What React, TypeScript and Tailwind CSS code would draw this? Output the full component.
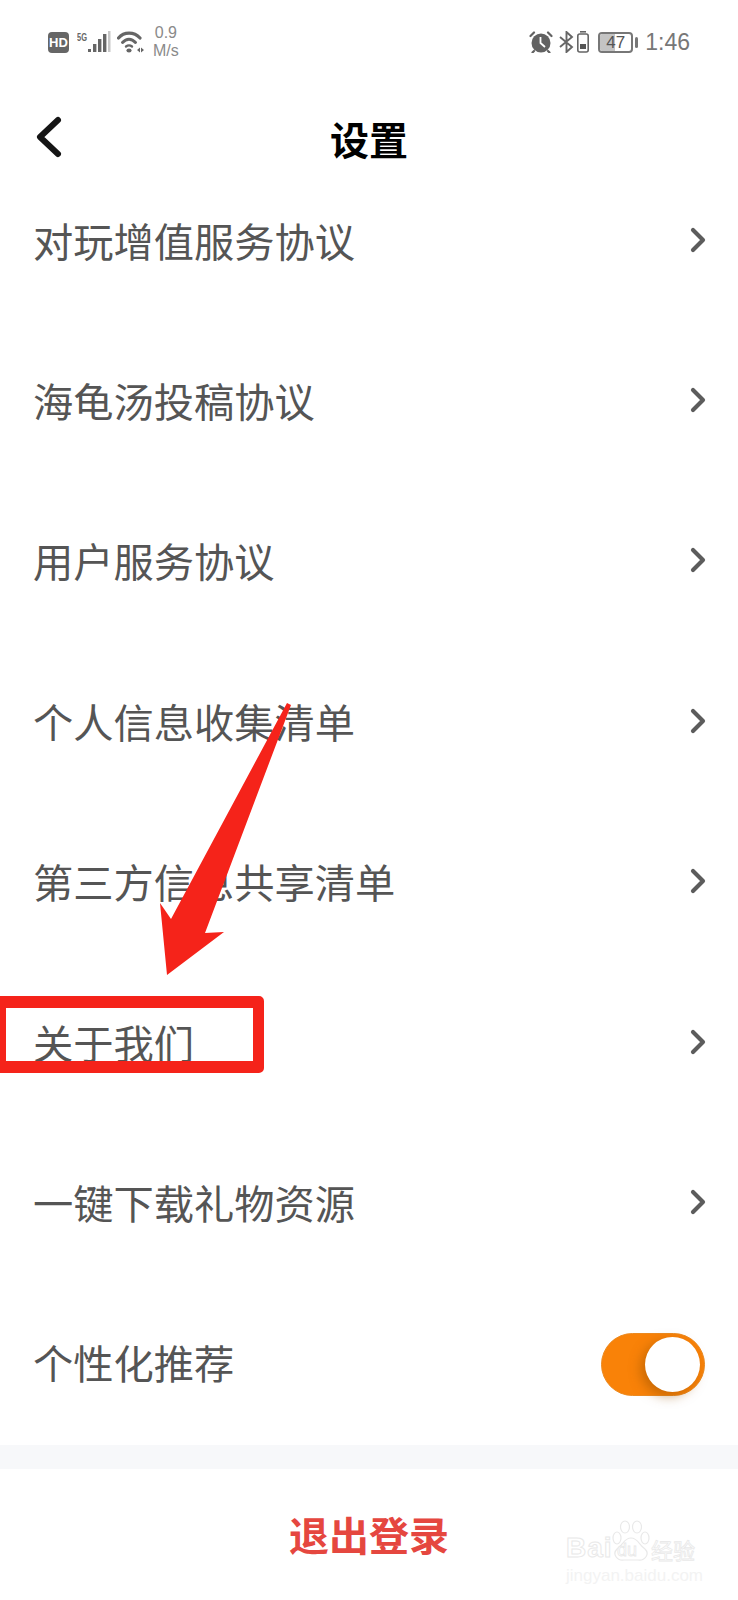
const rows = [
  "对玩增值服务协议",
  "海龟汤投稿协议",
  "用户服务协议",
  "个人信息收集清单",
  "第三方信息共享清单",
  "关于我们",
  "一键下载礼物资源",
]

function Chevron() {
  return (
    <svg width="16" height="26" viewBox="0 0 16 26" fill="none">
      <path d="M3 3 L13 13 L3 23" stroke="#5c5c5c" strokeWidth="4.2" strokeLinecap="round" strokeLinejoin="round" />
    </svg>
  )
}

function StatusLeft() {
  return (
    <div className="flex items-center">
      {/* HD badge */}
      <div className="ml-[48px] w-[21px] h-[21px] rounded-[4px] bg-[#666] text-white text-[13px] font-bold flex items-center justify-center leading-none font-['Liberation_Sans',sans-serif]">
        HD
      </div>
      {/* 5G + signal */}
      <svg className="ml-[8px]" width="34" height="22" viewBox="0 0 34 22">
        <text x="0" y="10" fontSize="11" fontWeight="700" fill="#666" textLength="10" lengthAdjust="spacingAndGlyphs" fontFamily="Liberation Sans, sans-serif">5G</text>
        <rect x="11" y="18" width="3" height="3" fill="#666" />
        <rect x="16" y="13" width="3.4" height="8" fill="#666" />
        <rect x="21" y="8" width="3.4" height="13" fill="#666" />
        <rect x="26" y="3" width="3.4" height="18" fill="#666" />
        <rect x="31" y="0" width="2.5" height="21" fill="#c8c8c8" />
      </svg>
      {/* wifi */}
      <svg className="ml-[6px]" width="27" height="22" viewBox="0 0 27 22" fill="none">
        <path d="M1.5 7 C7 0.5 17 0.5 23 7" stroke="#666" strokeWidth="3.2" strokeLinecap="round" />
        <path d="M5.5 11.5 C9.5 7 14.5 7 18.5 11.5" stroke="#666" strokeWidth="3" strokeLinecap="round" />
        <path d="M9 15.5 C11 14 13 14 15 15.5" stroke="#666" strokeWidth="2.4" strokeLinecap="round" />
        <ellipse cx="12" cy="19.5" rx="2.6" ry="2" fill="#666" />
        <path d="M20 19 L23 16.5 V21.5 Z M27 19 L24 16.5 V21.5 Z" fill="#666" />
      </svg>
      <div className="ml-[9px] flex flex-col items-center text-[16px] leading-[18px] text-[#8a8a8a] font-['Liberation_Sans',sans-serif]">
        <span>0.9</span>
        <span>M/s</span>
      </div>
    </div>
  )
}

function StatusRight() {
  return (
    <div className="flex items-center mr-[48px]">
      {/* alarm */}
      <svg width="24" height="22" viewBox="0 0 24 22" fill="none">
        <circle cx="12" cy="12" r="9.5" fill="#626262" />
        <path d="M11.5 6 V12 L16 16" stroke="#fff" strokeWidth="1.8" />
        <path d="M1.5 5 L5 1.5 M22.5 5 L19 1.5 M5 20 L3.5 21.5 M19 20 L20.5 21.5" stroke="#626262" strokeWidth="2.2" strokeLinecap="round" />
      </svg>
      {/* bluetooth */}
      <svg className="ml-[6px]" width="15" height="22" viewBox="0 0 15 22" fill="none">
        <path d="M1 6 L13 16 L7.5 21 V1 L13 6 L1 16" stroke="#666" strokeWidth="1.9" />
      </svg>
      {/* phone battery */}
      <svg className="ml-[3px]" width="12" height="22" viewBox="0 0 12 22" fill="none">
        <rect x="3" y="0" width="6" height="1.6" fill="#666" />
        <rect x="0.8" y="3" width="10.4" height="18" rx="2" stroke="#666" strokeWidth="1.6" />
        <rect x="3" y="13" width="6" height="5" fill="#555" />
      </svg>
      {/* battery */}
      <div className="ml-[9px] relative w-[35px] h-[21px] rounded-[4px] border-2 border-[#777] overflow-hidden font-['Liberation_Sans',sans-serif]">
        <div className="absolute left-0 top-0 bottom-0 w-[15px] bg-[#c4c4c4]" />
        <div className="absolute inset-0 flex items-center justify-center text-[17px] leading-none text-[#555]">47</div>
      </div>
      <div className="ml-[2px] w-[3px] h-[11px] rounded-sm bg-[#777]" />
      <span className="ml-[7px] text-[23px] leading-none text-[#777] font-['Liberation_Sans',sans-serif]">1:46</span>
    </div>
  )
}

function Toggle() {
  return (
    <div className="w-[104px] h-[63px] rounded-full bg-[#f98208] flex items-center justify-end pr-[4px] border border-[#ec8a20]">
      <div className="w-[55px] h-[55px] rounded-full bg-white shadow-[-4px_4px_12px_rgba(150,80,0,0.5)]" />
    </div>
  )
}

export default function App() {
  return (
    <div className="relative w-[738px] h-[1600px] overflow-hidden bg-white flex flex-col font-['Noto_Sans_CJK_SC',sans-serif]">
      <div className="h-[84px] flex items-center justify-between shrink-0">
        <StatusLeft />
        <StatusRight />
      </div>

      {/* Title bar */}
      <div className="relative h-[78px] pt-[30px] flex items-center justify-center shrink-0">
        <svg className="absolute left-[35px] top-[31px]" width="28" height="46" viewBox="0 0 28 46" fill="none">
          <path d="M23 5 L5 22 L23 39" stroke="#151515" strokeWidth="6" strokeLinecap="round" strokeLinejoin="round" />
        </svg>
        <h1 className="text-[39px] leading-none font-bold text-black">设置</h1>
      </div>

      {/* Rows */}
      <div className="shrink-0">
        {rows.map((label) => (
          <div key={label} className="h-[160.4px] flex items-center justify-between pl-[33px] pr-[32px]">
            <span className="text-[40.25px] leading-none text-[#555] pb-[5px]">{label}</span>
            <div className="pb-[5px]">
              <Chevron />
            </div>
          </div>
        ))}
        <div className="h-[160.4px] flex items-center justify-between pl-[33px] pr-[33px]">
          <span className="text-[40.25px] leading-none text-[#555] pb-[5px]">个性化推荐</span>
          <Toggle />
        </div>
      </div>

      <div className="h-[24px] bg-[#f7f8fa] shrink-0" />

      {/* Logout */}
      <div className="flex-1 flex items-center justify-center pb-[1px]">
        <span className="text-[40px] leading-none font-bold text-[#e5473f]">退出登录</span>
      </div>

      {/* Annotation: arrow */}
      <svg className="absolute left-0 top-0 pointer-events-none" width="738" height="1600" fill="none">
        <polygon points="287,703 291,705 205,933 224,932 167,975 160,903 171,919" fill="#f5231a" />
      </svg>

      {/* Annotation: red box */}
      <div className="absolute left-0 top-[996px] w-[264px] h-[77px] rounded-r-[5px] border-y-[12px] border-l-[6px] border-r-[11px] border-[#f5231a]" />

      {/* Watermark */}
      <div className="absolute left-[566px] top-[1518px] w-[134px] pointer-events-none text-white [-webkit-text-stroke:1px_#e9e9e9]">
        <div className="flex items-end h-[44px]">
          <span className="text-[28px] leading-[28px] font-bold font-['Liberation_Sans',sans-serif] w-[45px] tracking-[1px]">Bai</span>
          <div className="relative w-[40px] h-[42px]">
            <svg className="absolute inset-0" width="40" height="42" viewBox="0 0 40 42" fill="none" stroke="#e9e9e9" strokeWidth="1.2">
              <ellipse cx="6" cy="18" rx="4" ry="6" />
              <ellipse cx="14" cy="7" rx="4.5" ry="6" />
              <ellipse cx="26" cy="7" rx="4.5" ry="6" />
              <ellipse cx="34" cy="18" rx="4" ry="6" />
              <path d="M20 18 C13 18 12 25 6 29 C1 34 6 41 13 40 H27 C34 41 39 34 34 29 C28 25 27 18 20 18 Z" />
            </svg>
            <span className="absolute left-[6px] bottom-[3px] text-[18px] leading-none font-['Liberation_Sans',sans-serif] [-webkit-text-stroke:0.8px_#e9e9e9]">du</span>
          </div>
          <span className="text-[22px] leading-[26px] [-webkit-text-stroke:0.8px_#e9e9e9] whitespace-nowrap">经验</span>
        </div>
        <div className="mt-[4px] text-[17px] leading-[20px] text-[#f3f3f3] [-webkit-text-stroke:0px] font-['Liberation_Sans',sans-serif] whitespace-nowrap">jingyan.baidu.com</div>
      </div>
    </div>
  )
}
